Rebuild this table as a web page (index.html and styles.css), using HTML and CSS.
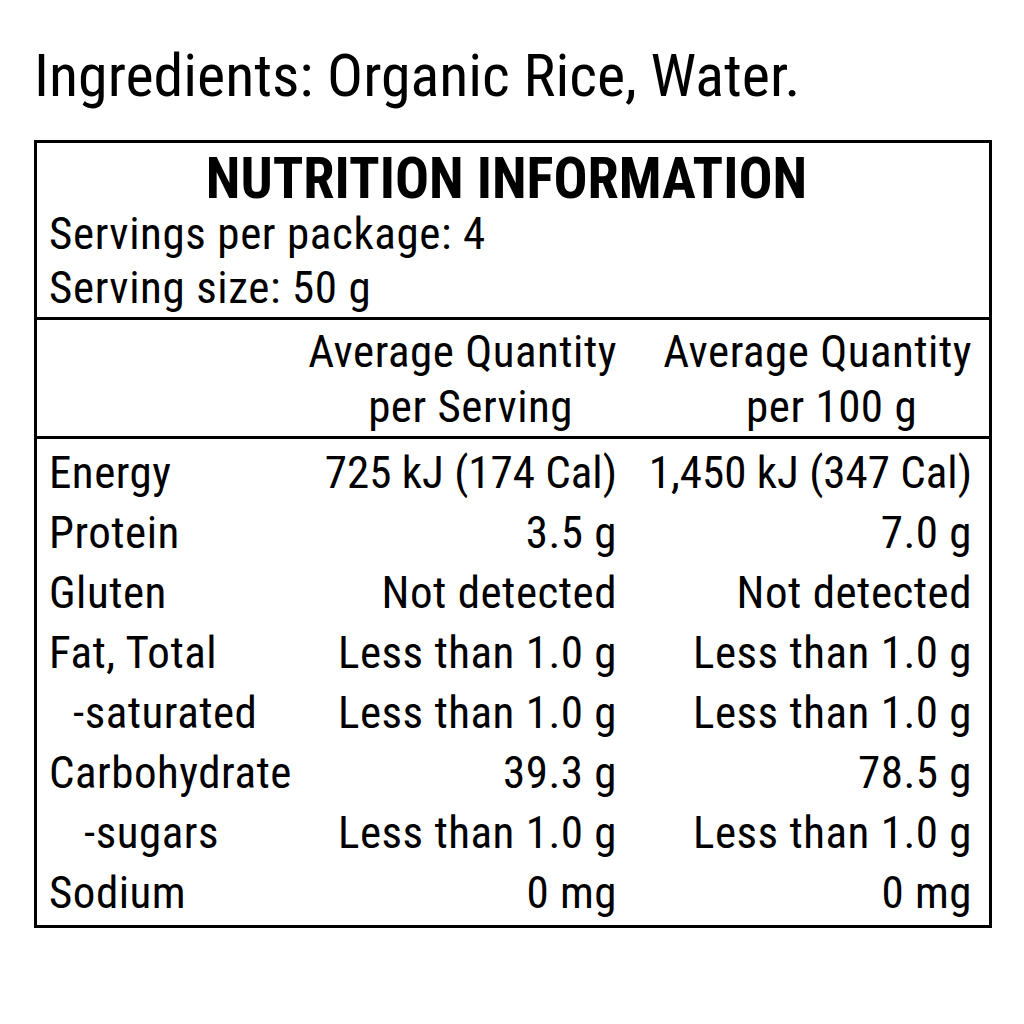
FILE: index.html
```html
<!DOCTYPE html>
<html lang="en">
<head>
<meta charset="utf-8">
<title>Nutrition Information</title>
<link rel="stylesheet" href="styles.css">
</head>
<body>
<div class="page">
  <p class="ingredients">Ingredients: Organic Rice, Water.</p>
  <section class="panel">
    <div class="top">
      <h1 class="title">NUTRITION INFORMATION</h1>
      <div class="meta">Servings per package: 4</div>
      <div class="meta">Serving size: 50 g</div>
    </div>
    <div class="grid head">
      <div class="cell label"></div>
      <div class="cell qty"><span class="hd">Average Quantity<br><span class="nudge-a">per Serving</span></span></div>
      <div class="cell qty"><span class="hd">Average Quantity<br><span class="nudge-b">per 100 g</span></span></div>
    </div>
    <div class="grid body">
      <div class="cell label">Energy</div><div class="cell qty energy">725 kJ (174 Cal)</div><div class="cell qty energy">1,450 kJ (347 Cal)</div>
      <div class="cell label">Protein</div><div class="cell qty">3.5 g</div><div class="cell qty">7.0 g</div>
      <div class="cell label">Gluten</div><div class="cell qty">Not detected</div><div class="cell qty">Not detected</div>
      <div class="cell label">Fat, Total</div><div class="cell qty">Less than 1.0 g</div><div class="cell qty">Less than 1.0 g</div>
      <div class="cell label sub1">-saturated</div><div class="cell qty">Less than 1.0 g</div><div class="cell qty">Less than 1.0 g</div>
      <div class="cell label">Carbohydrate</div><div class="cell qty">39.3 g</div><div class="cell qty">78.5 g</div>
      <div class="cell label sub2">-sugars</div><div class="cell qty">Less than 1.0 g</div><div class="cell qty">Less than 1.0 g</div>
      <div class="cell label">Sodium</div><div class="cell qty">0 mg</div><div class="cell qty">0 mg</div>
    </div>
  </section>
</div>
</body>
</html>
```

FILE: styles.css
```css
html, body {
  margin: 0;
  padding: 0;
  background: #ffffff;
}
body {
  font-family: "Roboto Condensed", "Liberation Sans", sans-serif;
  color: #000;
}
.page {
  padding: 41px 0 0 34px;
}
.ingredients {
  margin: 0;
  font-size: 60px;
  line-height: 70px;
  white-space: nowrap;
}
.panel {
  margin-top: 29px;
  width: 952px;
  border: 3px solid #000;
}
.top {
  padding: 8px 12px 2px 12px;
  border-bottom: 3px solid #000;
}
.title {
  margin: 0;
  padding-right: 13px;
  font-size: 56.5px;
  line-height: 56px;
  font-weight: bold;
  text-align: center;
  white-space: nowrap;
}
.meta {
  font-size: 45px;
  letter-spacing: 0.6px;
  line-height: 54px;
  white-space: nowrap;
}
.grid {
  display: grid;
  grid-template-columns: minmax(0, 1fr) 330px 355px;
  padding: 0 17px 0 12px;
  font-size: 45px;
  letter-spacing: 0.5px;
  line-height: 60px;
}
.head {
  line-height: 55px;
  padding-top: 4px;
  padding-bottom: 2px;
  border-bottom: 3px solid #000;
}
.body {
  padding-top: 4px;
  padding-bottom: 2px;
}
.cell {
  white-space: nowrap;
}
.qty {
  text-align: right;
}
.energy {
  letter-spacing: 0;
}
.hd {
  display: inline-block;
  text-align: center;
}
.nudge-a {
  position: relative;
  left: 8px;
}
.nudge-b {
  position: relative;
  left: 14px;
}
.sub1 {
  padding-left: 24px;
}
.sub2 {
  padding-left: 35px;
}
```
